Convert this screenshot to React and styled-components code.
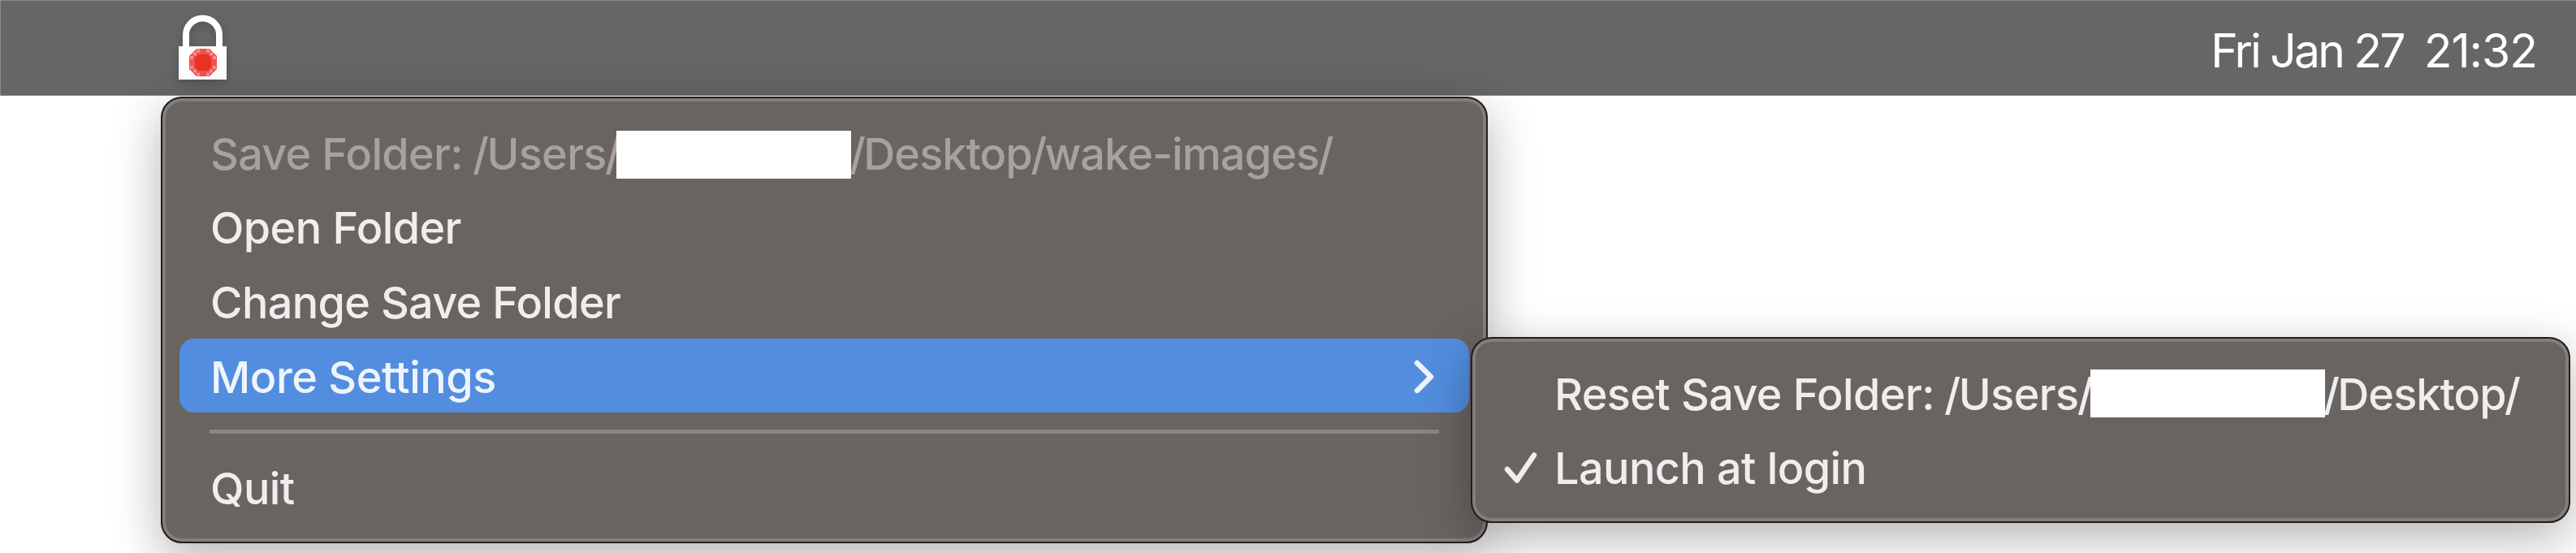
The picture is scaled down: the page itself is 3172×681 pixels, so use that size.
import React, { Fragment } from "react";
import styled, { createGlobalStyle } from "styled-components";

const GlobalStyle = createGlobalStyle`
  * { box-sizing: border-box; }
  body { margin: 0; background: #fff; overflow: hidden; font-family: Inter, "Liberation Sans", sans-serif; }
`;

const Desktop = styled.div`
  position: relative;
  height: 681px;
  overflow: hidden;
  background: #fff;
`;

const MenuBar = styled.header`
  display: flex;
  align-items: center;
  justify-content: space-between;
  height: 118px;
  padding: 0 48px 0 219px;
  background: #666;
  border: solid #8a8888;
  border-width: 1px 0 1px 1px;
`;

const LockIcon = styled.svg`
  width: 60px;
  height: 82px;
  overflow: visible;
  filter: drop-shadow(0 4px 6px rgba(0, 0, 0, 0.2));
`;

const Clock = styled.time`
  display: flex;
  gap: 25px;
  font-size: 57px;
  line-height: 70px;
  padding-top: 7px;
  font-weight: 400;
  color: #fff;
  white-space: pre;
`;

const Day = styled.span`
  letter-spacing: -2.8px;
`;

const Time = styled.span`
  letter-spacing: -1px;
`;

const Menu = styled.ul`
  position: absolute;
  left: ${(p) => p.$x}px;
  top: ${(p) => p.$y}px;
  width: ${(p) => p.$width}px;
  height: ${(p) => p.$height}px;
  margin: 0;
  padding: 21px;
  list-style: none;
  display: flex;
  flex-direction: column;
  background: #6a6461;
  border: 2px solid #1f1f1f;
  border-radius: 26px;
  box-shadow: inset 0 0 0 4px #847e7b, 0 18px 60px rgba(0, 0, 0, 0.3);
`;

const Item = styled.li`
  display: flex;
  align-items: center;
  flex: 0 0 91.6px;
  padding: 4px 38px 0 ${(p) => p.$indent || 38}px;
  border-radius: 18px;
  background: ${(p) => (p.$active ? "#528ddf" : "transparent")};
  color: ${(p) => (p.$disabled ? "#a7a29f" : p.$active ? "#eef4fc" : "#efeeee")};
  font-size: 54px;
  line-height: 66px;
  font-weight: 450;
  white-space: pre;
`;

const Label = styled.span`
  flex: none;
  letter-spacing: ${(p) => p.$track ?? -0.6}px;
`;

const Slash = styled.span`
  margin: 0 -1.7px;
`;

const Redacted = styled.span`
  position: relative;
  flex: 0 0 289px;
  height: 59px;
  margin-top: ${(p) => p.$drop}px;
  margin-left: ${(p) => -p.$overlap}px;
  background: #fff;
`;

const Divider = styled.li`
  flex: 0 0 45.6px;
  padding: 20.5px 37px 0;
  &::before {
    content: "";
    display: block;
    height: 5px;
    background: #8c8682;
  }
`;

const Chevron = styled.svg`
  width: 26px;
  height: 42px;
  margin: -2px 4px 0 auto;
`;

const CheckSlot = styled.span`
  display: flex;
  flex: 0 0 63px;
  height: 42px;
`;

const GLINTS = [
  [22, 42.5], [34, 42.5], [18, 46.5], [38, 46.5], [14, 51], [42, 51],
  [14, 63], [42, 63], [18, 67.5], [38, 67.5], [22, 71.5], [34, 71.5],
];

function Lock() {
  return (
    <LockIcon viewBox="0 0 60 82">
      <path d="M9 42V25a20.5 20.5 0 0 1 41 0v17" fill="none" stroke="#fff" strokeWidth="8" />
      <path d="M0 39h59v41H0z" fill="#fff" />
      <path d="M22 42h16l9 9v16l-9 9H22l-9-9V51z" fill="#f05250" />
      {GLINTS.map(([x, y]) => (
        <rect key={`${x}-${y}`} x={x} y={y} width="4" height="4" fill="#f58e8c" />
      ))}
      <path d="M24 49h12l4 4v12l-4 4H24l-4-4V53z" fill="#e93323" />
    </LockIcon>
  );
}

function PathLabel({ text, track }) {
  return (
    <Label $track={track}>
      {text.split("/").map((part, i) => (
        <Fragment key={i}>
          {i > 0 && <Slash>/</Slash>}
          {part}
        </Fragment>
      ))}
    </Label>
  );
}

export default function App() {
  return (
    <>
      <GlobalStyle />
      <Desktop>
        <MenuBar>
          <Lock />
          <Clock><Day>Fri Jan 27</Day><Time>21:32</Time></Clock>
        </MenuBar>
        <Menu $x={198} $y={119} $width={1634} $height={550}>
          <Item $disabled>
            <PathLabel text="Save Folder: /Users/" track={-0.7} />
            <Redacted $drop={1} $overlap={4} />
            <PathLabel text="/Desktop/wake-images/" track={-0.9} />
          </Item>
          <Item><Label>Open Folder</Label></Item>
          <Item><Label $track={-0.7}>Change Save Folder</Label></Item>
          <Item $active>
            <Label $track={-0.5}>More Settings</Label>
            <Chevron viewBox="0 0 26 42">
              <path d="M4 4l17 17L4 38" fill="none" stroke="#eef4fc" strokeWidth="6.5" strokeLinecap="round" strokeLinejoin="round" />
            </Chevron>
          </Item>
          <Divider />
          <Item><Label>Quit</Label></Item>
        </Menu>
        <Menu $x={1811} $y={415} $width={1354} $height={229}>
          <Item $indent={17}>
            <CheckSlot />
            <PathLabel text="Reset Save Folder: /Users/" track={-0.6} />
            <Redacted $drop={-3} $overlap={2} />
            <PathLabel text="/Desktop/" track={-0.9} />
          </Item>
          <Item $indent={17}>
            <CheckSlot>
              <svg width="42" height="42" viewBox="0 0 42 42">
                <path d="M5 22L17 35.5L38 4.5" fill="none" stroke="#efeeee" strokeWidth="6.5" strokeLinecap="round" strokeLinejoin="round" />
              </svg>
            </CheckSlot>
            <Label>Launch at login</Label>
          </Item>
        </Menu>
      </Desktop>
    </>
  );
}
